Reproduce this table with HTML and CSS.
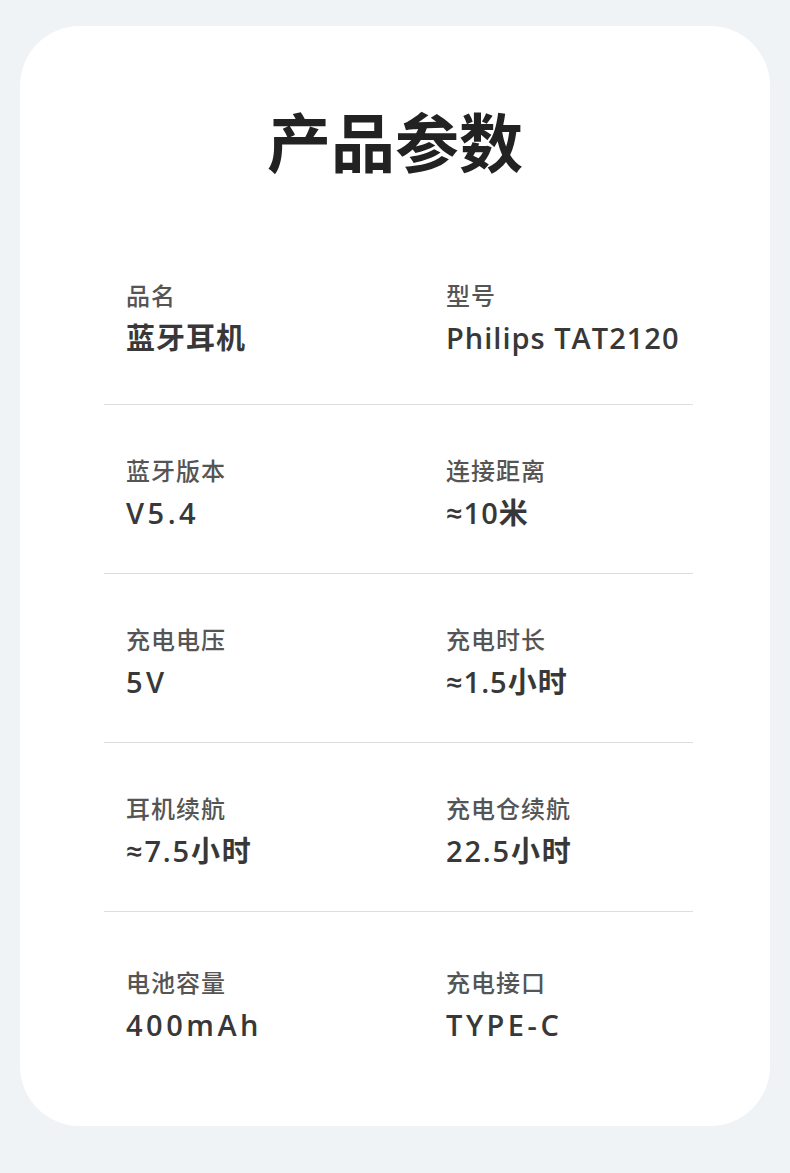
FILE: index.html
```html
<!DOCTYPE html>
<html lang="zh">
<head>
<meta charset="utf-8">
<title>产品参数</title>
<link rel="stylesheet" href="styles.css">
</head>
<body>
<div class="card">
  <h1 class="title">产品参数</h1>
  <div class="specs">
    <div class="row first">
      <div class="cell"><div class="label">品名</div><div class="value">蓝牙耳机</div></div>
      <div class="cell"><div class="label">型号</div><div class="value">Philips TAT2120</div></div>
    </div>
    <div class="row">
      <div class="cell"><div class="label">蓝牙版本</div><div class="value wide">V5.4</div></div>
      <div class="cell"><div class="label">连接距离</div><div class="value">≈10米</div></div>
    </div>
    <div class="row">
      <div class="cell"><div class="label">充电电压</div><div class="value wide">5V</div></div>
      <div class="cell"><div class="label">充电时长</div><div class="value">≈1.5小时</div></div>
    </div>
    <div class="row">
      <div class="cell"><div class="label">耳机续航</div><div class="value mid">≈7.5小时</div></div>
      <div class="cell"><div class="label">充电仓续航</div><div class="value mid">22.5小时</div></div>
    </div>
    <div class="row last">
      <div class="cell"><div class="label">电池容量</div><div class="value wide">400mAh</div></div>
      <div class="cell"><div class="label">充电接口</div><div class="value wide">TYPE-C</div></div>
    </div>
  </div>
</div>
</body>
</html>
```

FILE: styles.css
```css
html, body {
  margin: 0;
  padding: 0;
}
body {
  background: #f0f3f6;
  width: 790px;
  height: 1173px;
  padding-top: 26px;
  box-sizing: border-box;
  font-family: "Open Sans", "Noto Sans CJK SC", sans-serif;
}
.card {
  margin: 0 20px;
  height: 1100px;
  box-sizing: border-box;
  background: #ffffff;
  border-radius: 60px;
  padding: 81px 77px 0 84px;
}
.title {
  margin: 0 0 59px 0;
  text-align: center;
  font-family: "Noto Sans CJK SC", sans-serif;
  font-size: 64px;
  line-height: 64px;
  font-weight: 700;
  color: #222222;
  padding-right: 7px;
}
.specs {
  display: flex;
  flex-direction: column;
}
.row {
  display: grid;
  grid-template-columns: 320px 1fr;
  padding: 53px 0 46px 22px;
  border-bottom: 1px solid #dedede;
}
.row.first {
  padding-bottom: 52px;
}
.row.last {
  border-bottom: none;
  padding-top: 58px;
}
.cell {
  display: flex;
  flex-direction: column;
  gap: 16px;
}
.label {
  font-family: "Noto Sans CJK SC", sans-serif;
  font-size: 24px;
  line-height: 24px;
  font-weight: 500;
  color: #555555;
  letter-spacing: 1px;
}
.value {
  font-size: 29px;
  line-height: 29px;
  font-weight: 600;
  color: #383838;
  letter-spacing: 1px;
  white-space: nowrap;
}
.value.mid {
  letter-spacing: 1.8px;
}
.value.wide {
  letter-spacing: 3.5px;
}
```
